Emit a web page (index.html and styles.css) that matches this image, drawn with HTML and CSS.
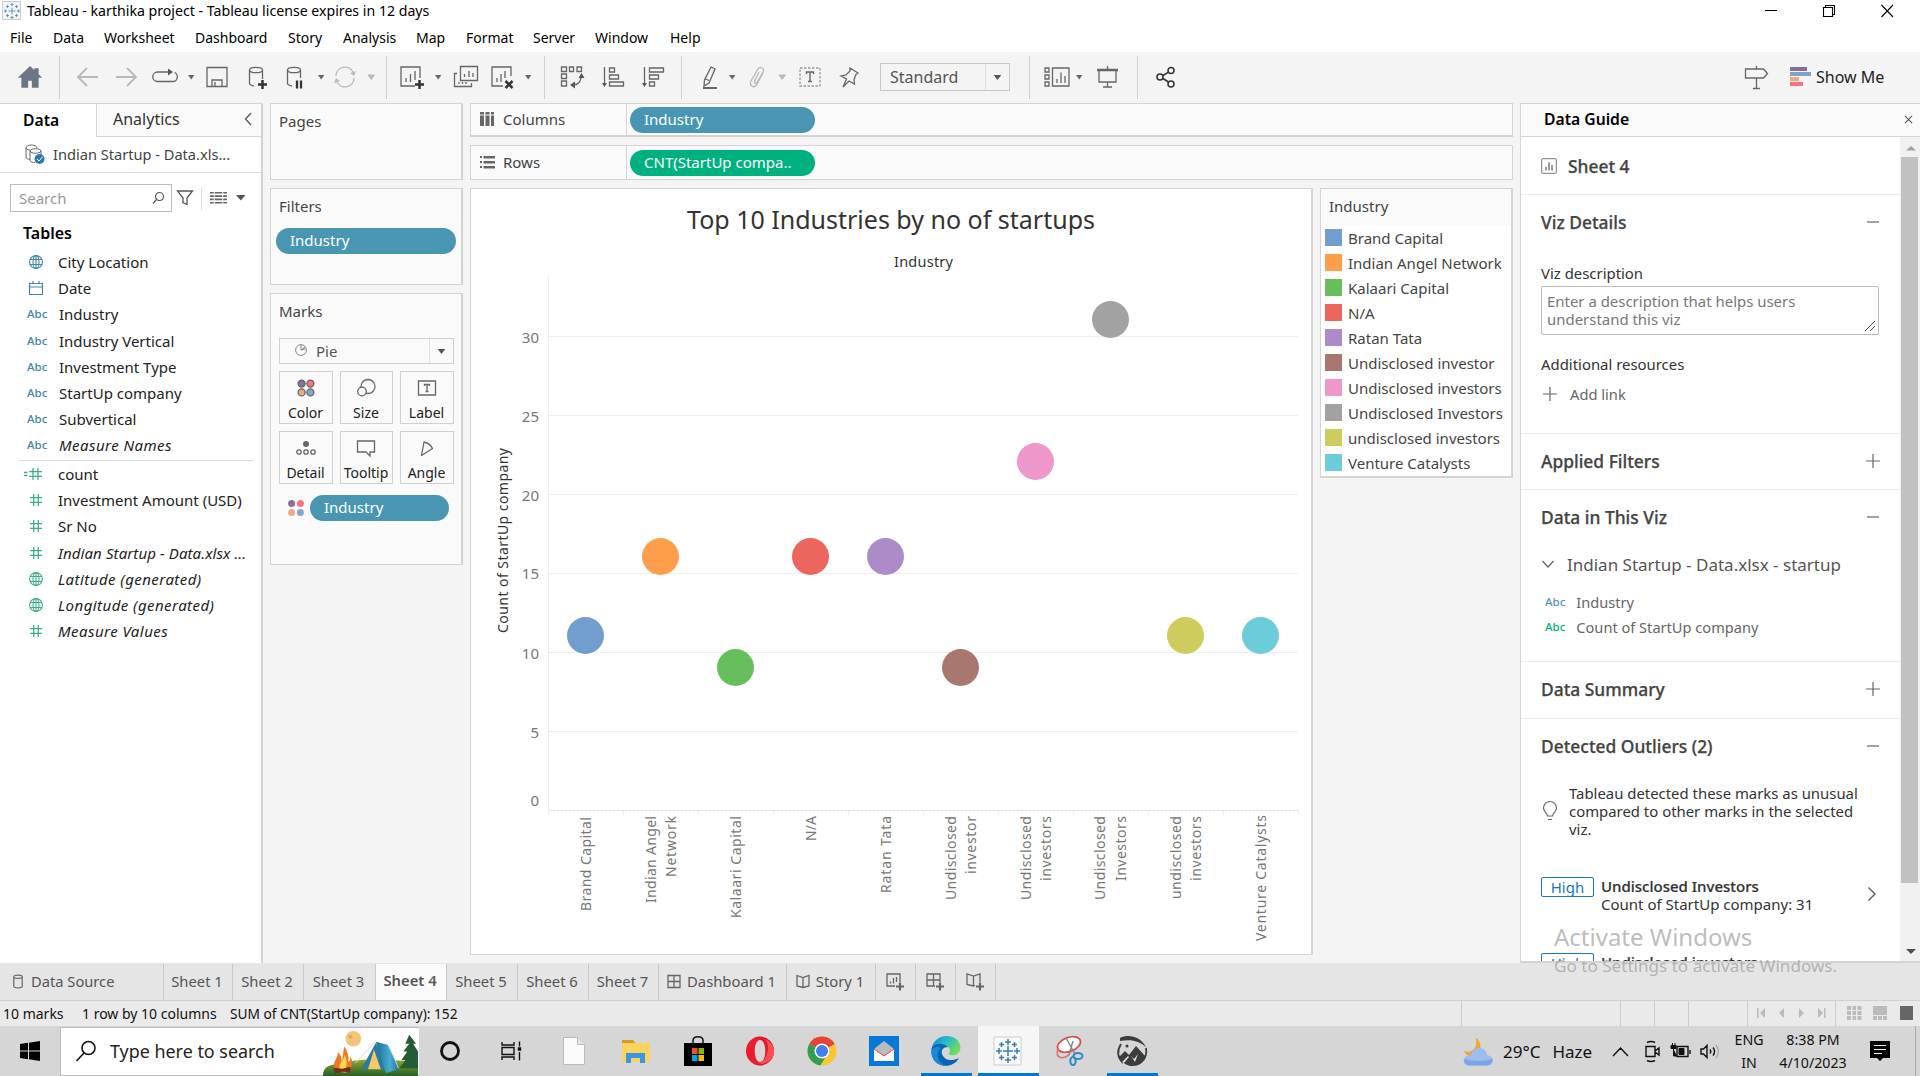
FILE: index.html
```html
<!DOCTYPE html>
<html lang="en">
<head>
<meta charset="utf-8">
<title>Tableau - karthika project</title>
<link rel="stylesheet" href="styles.css">
</head>
<body>
<svg class="defs" aria-hidden="true">
  <symbol id="globe" viewBox="0 0 16 16"><g fill="none" stroke="currentColor" stroke-width="1.1"><circle cx="8" cy="8" r="6.4"/><ellipse cx="8" cy="8" rx="3" ry="6.4"/><path d="M2 5.500h12M2 10.500h12M8 1.600v12.800"/></g></symbol>
  <symbol id="hash" viewBox="0 0 16 16"><path d="M5.700 2v12M10.300 2v12M2 5.700h12M2 10.300h12" fill="none" stroke="currentColor" stroke-width="1.300"/></symbol>
  <symbol id="dots" viewBox="0 0 18 18"><circle cx="4.600" cy="4.600" r="3.500" fill="#8a7099"/><circle cx="13.400" cy="4.600" r="3.500" fill="#fc7182"/><circle cx="4.600" cy="13.400" r="3.500" fill="#f1a981"/><circle cx="13.400" cy="13.400" r="3.500" fill="#85a6ce"/></symbol>
  <symbol id="caret" viewBox="0 0 10 26"><path d="M2 11h6.400l-3.200 4.400z" fill="currentColor"/></symbol>
  <symbol id="plus" viewBox="0 0 16 16"><path d="M8 1v14M1 8h14" stroke="currentColor" stroke-width="1.200"/></symbol>
  <symbol id="minus" viewBox="0 0 16 16"><path d="M2 8h12" stroke="currentColor" stroke-width="1.200"/></symbol>
</svg>

<header class="titlebar">
  <svg class="app-logo" viewBox="0 0 20 20"><rect x=".5" y=".5" width="18" height="18" fill="#f4f4f4" stroke="#ccc"/><path d="M10 6.500v7M6.500 10h7M10 2v3M8.500 3.500h3M10 15v3M8.500 16.500h3M3.500 8.500v3M2 10h3M16.500 8.500v3M15 10h3M5.500 4v3M4 5.500h3M14.500 4v3M13 5.500h3M5.500 13v3M4 14.500h3M14.500 13v3M13 14.500h3" stroke="#5c9bc0" fill="none"/></svg>
  <span class="title-text">Tableau - karthika project - Tableau license expires in 12 days</span>
  <svg class="window-buttons" viewBox="0 0 130 20" fill="none" stroke="#000" stroke-width="1.100"><path d="M1 9.500h12M117.500 4l11.500 12M129 4l-11.500 12"/><path d="M59.500 6.500h9v9h-9zM61.500 6.500v-2h9v9h-2"/></svg>
</header>
<nav class="menu"><span>File</span><span>Data</span><span>Worksheet</span><span>Dashboard</span><span>Story</span><span>Analysis</span><span>Map</span><span>Format</span><span>Server</span><span>Window</span><span>Help</span></nav>

<div class="toolbar">
  <svg class="ico" viewBox="0 0 26 26"><path d="M13 3L2.500 13H5v10h5.500v-7h5v7H21V13h2.500L21 10.500V5h-3v2.500z" fill="#6b7785" stroke="#6b7785"/></svg>
  <i class="sep"></i>
  <svg class="ico dim" viewBox="0 0 26 26"><path d="M24 13H4M13 4l-9 9 9 9" stroke-width="1.800"/></svg>
  <svg class="ico dim" viewBox="0 0 26 26"><path d="M2 13h20M13 4l9 9-9 9" stroke-width="1.800"/></svg>
  <svg class="ico" viewBox="0 0 26 26"><path d="M17 8H5.500a4.700 4.700 0 0 0 0 9.500h15a4.700 4.700 0 0 0 2-9" stroke-width="1.300"/><path d="M16 4.500l5 3.500-5 3.500z" fill="#555" stroke="none"/></svg>
  <svg class="car"><use href="#caret"/></svg>
  <svg class="ico" viewBox="0 0 26 26"><path d="M3 3.500h20v19H3zM8 22v-6h10v6M11 18v4" /></svg>
  <svg class="ico" viewBox="0 0 26 26"><ellipse cx="12" cy="6" rx="6.500" ry="2.700"/><path d="M5.500 6v13.500c0 1 2 2 4.500 2.500M18.500 6v9"/><path d="M18.500 16v9M14 20.500h9" stroke="#333" stroke-width="2.500"/></svg>
  <svg class="ico" viewBox="0 0 26 26"><ellipse cx="12" cy="6" rx="6.500" ry="2.700"/><path d="M5.500 6v13.500c0 1 2 2 4.500 2.500M18.500 6v8"/><path d="M15 16.500v8M19 16.500v8" stroke="#333" stroke-width="2.300"/></svg>
  <svg class="car"><use href="#caret"/></svg>
  <svg class="ico dim" viewBox="0 0 26 26"><path d="M4 12a9 9 0 0 1 17-4M22 14a9 9 0 0 1-17 4"/><path d="M24 7l-2 5-4-3zM2 19l2-5 4 3z" fill="#b8b8b8" stroke="none"/></svg>
  <svg class="car dim"><use href="#caret"/></svg>
  <i class="sep"></i>
  <svg class="ico" viewBox="0 0 26 26"><path d="M16 22H2V3h19v11M7 18v-4M11.500 18v-8M16 16V7"/><path d="M20.500 16v9M16 20.500h9" stroke="#333" stroke-width="2.500"/></svg>
  <svg class="car"><use href="#caret"/></svg>
  <svg class="ico" viewBox="0 0 26 26"><path d="M7.500 2.500h17v14h-17zM11.500 13v-3M16 13V7M20 13V9M4 9.500H1.500v13h17V19M6 20v-2M9.500 20v-2M13 20v-2"/></svg>
  <svg class="ico" viewBox="0 0 26 26"><path d="M14 22H3V3h19v9M8 18v-4M12 18v-8M16 14V7"/><path d="M16.500 17l7 7M23.500 17l-7 7" stroke="#333" stroke-width="2.500"/></svg>
  <svg class="car"><use href="#caret"/></svg>
  <i class="sep"></i>
  <svg class="ico" viewBox="0 0 26 26"><path d="M2.500 3h5v4.500h-5zM10.500 3h4v4.500h-4zM18 3h4.500v4.500H18zM2.500 10h5v4.500h-5zM2.500 17h5v5h-5zM22 12c0 6-3 9-8 9"/><path d="M22.500 9l3 5h-6zM11 21l5-3.500v7z" fill="#555" stroke="none"/></svg>
  <svg class="ico" viewBox="0 0 26 26"><path d="M4.500 3v18M9.500 4h5v4h-5zM9.500 11h9v4h-9zM9.500 18h14v4h-14z"/><path d="M2 19h5l-2.500 4z" fill="#555" stroke="none"/></svg>
  <svg class="ico" viewBox="0 0 26 26"><path d="M4.500 3v18M9.500 4h14v4h-14zM9.500 11h9v4h-9zM9.500 18h5v4h-5z"/><path d="M2 19h5l-2.500 4z" fill="#555" stroke="none"/></svg>
  <i class="sep"></i>
  <svg class="ico" viewBox="0 0 26 26"><path d="M14 3l4 2-6 14-5 3 .500-6zM7.500 14.500l4.500 2"/><path d="M6 24h14" stroke-width="2"/></svg>
  <svg class="car"><use href="#caret"/></svg>
  <svg class="ico dim" viewBox="0 0 26 26"><path d="M14 8l-4.500 9c-.6 2.500 1.500 3 2.500 1.500L18.500 7c.8-3-3.500-5-5.500-2L6 17c-2 5 3 7.500 5.500 4L18 9"/></svg>
  <svg class="car dim"><use href="#caret"/></svg>
  <i class="sep blank"></i>
  <svg class="ico text-tool" viewBox="0 0 26 26"><path d="M3 4h20v18H3z" stroke-dasharray="2.500 1.500" stroke="#999"/><path d="M9.500 10V8h7v2M13 8v9.500M11 17.500h4" stroke-width="1.400"/></svg>
  <svg class="ico" viewBox="0 0 26 26"><path d="M13 4l8 5-2 1.500-2 5 .5 4.500-5.500-3-6 6 3.500-8L4 12l5-1 4-4z"/></svg>
  <div class="fit-select"><span>Standard</span><svg viewBox="0 0 24 26"><path d="M8 11h8l-4 5z" fill="#555"/></svg></div>
  <i class="sep"></i>
  <svg class="ico" viewBox="0 0 26 26"><path d="M1 4h4v4H1zM1 11h4v4H1zM1 18h4v4H1zM8.500 4H25v18H8.500zM13 19v-4M17 19V8.500M21 19v-7"/></svg>
  <svg class="car"><use href="#caret"/></svg>
  <svg class="ico" viewBox="0 0 26 26"><path d="M5 6v12h17V6M13.500 18v5M9 23h9M13.500 2v3"/><path d="M3 6h21" stroke-width="2.500"/></svg>
  <i class="sep"></i>
  <svg class="ico share" viewBox="0 0 26 26"><circle cx="8" cy="13" r="3"/><circle cx="19" cy="6.500" r="3"/><circle cx="19" cy="20" r="3"/><path d="M11 11.500l5.500-3.300M11 14.500l5.500 3.500"/></svg>
  <svg class="ico guide" viewBox="0 0 26 26"><path d="M2.500 5h18l4 4.500-4 4.500h-18zM13.500 2v3M13.500 14v10M10 24.500h7"/></svg>
  <div class="show-me"><svg viewBox="0 0 22 20"><path d="M0 0h17v4H0z" fill="#8a6d9c"/><path d="M0 5h21v4H0z" fill="#7ea3cb"/><path d="M0 10h9v4H0z" fill="#f3a77c"/><path d="M0 15h13v4H0z" fill="#fc7182"/></svg><span>Show Me</span></div>
</div>

<main class="workspace">
  <aside class="data-pane">
    <div class="pane-tabs"><b>Data</b><div><span>Analytics</span><svg viewBox="0 0 10 16"><path d="M8 2L2.500 8 8 14" fill="none" stroke="#555" stroke-width="1.300"/></svg></div></div>
    <div class="source"><svg viewBox="0 0 22 22" fill="none" stroke="#666"><path d="M13 5c0-4-11-4-11 0v9c0 2 2 2 4 2.500M2 5c1 2 3 2 4 2M6 8c0-3 11-3 11 0v4M6 8v9c0 2 3 2.500 5 2.500M6 8c1 3 10 3 11 0"/><circle cx="15.500" cy="16" r="5" fill="#2f7aa8" stroke="none"/><path d="M13 16l2 2 3.500-4" stroke="#fff"/></svg><span>Indian Startup - Data.xls...</span></div>
    <div class="search-row">
      <div class="search"><span>Search</span><svg viewBox="0 0 16 16" fill="none" stroke="#555" stroke-width="1.200"><circle cx="9.500" cy="6.500" r="4"/><path d="M6.500 9.500L3 13.500"/></svg></div>
      <svg class="funnel" viewBox="0 0 18 18"><path d="M1.500 2h15l-5.500 7v6.500l-4-2V9z" fill="none" stroke="#555" stroke-width="1.300"/></svg><i></i>
      <svg class="list" viewBox="0 0 18 14"><path d="M0 1.500h18M0 5h18M0 8.500h18M0 12h18" stroke="#666" stroke-width="1.700" stroke-dasharray="4 1 8 1"/></svg>
      <svg class="list-caret" viewBox="0 0 10 6"><path d="M0 0h9.500l-4.700 5.500z" fill="#555"/></svg>
    </div>
    <h2>Tables</h2>
    <ul class="fields dimension">
      <li><svg><use href="#globe"/></svg><span>City Location</span></li>
      <li><svg viewBox="0 0 16 16"><path d="M1.500 3.500h13v11h-13zM1.500 7h13M5 1v3M11 1v3" fill="none" stroke="currentColor" stroke-width="1.200"/></svg><span>Date</span></li>
      <li><b>Abc</b><span>Industry</span></li><li><b>Abc</b><span>Industry Vertical</span></li><li><b>Abc</b><span>Investment Type</span></li><li><b>Abc</b><span>StartUp company</span></li><li><b>Abc</b><span>Subvertical</span></li><li><b>Abc</b><em>Measure Names</em></li>
    </ul>
    <ul class="fields measure">
      <li><svg class="calc" viewBox="0 0 20 16"><path d="M0 6.500h3.500M0 9.500h3.500M9 2v12M14 2v12M5 5.700h13M5 10.300h13" stroke="currentColor" stroke-width="1.300"/></svg><span>count</span></li>
      <li><svg><use href="#hash"/></svg><span>Investment Amount (USD)</span></li><li><svg><use href="#hash"/></svg><span>Sr No</span></li><li><svg><use href="#hash"/></svg><em class="long">Indian Startup - Data.xlsx ...</em></li><li><svg><use href="#globe"/></svg><em>Latitude (generated)</em></li><li><svg><use href="#globe"/></svg><em>Longitude (generated)</em></li><li><svg><use href="#hash"/></svg><em>Measure Values</em></li>
    </ul>
  </aside>

  <section class="cards">
    <div class="card pages"><h3>Pages</h3></div>
    <div class="card filters"><h3>Filters</h3><div class="pill">Industry</div></div>
    <div class="card marks"><h3>Marks</h3>
      <div class="mark-type"><svg viewBox="0 0 14 14" fill="none" stroke="#888"><circle cx="7" cy="7" r="5.400"/><path d="M7 7V2M7 7l4-3M7 7l4.500-1"/></svg><span>Pie</span><svg class="drop" viewBox="0 0 24 24"><path d="M8 10h8l-4 5z" fill="#555"/></svg></div>
      <div class="mark-grid">
        <div><svg viewBox="0 0 20 20"><use href="#dots" x="1" y="1" width="18" height="18"/></svg>Color</div>
        <div><svg viewBox="0 0 20 20"><circle cx="12" cy="8.500" r="7"/><circle cx="6" cy="13.500" r="4.300" fill="#fafafa"/></svg>Size</div>
        <div><svg viewBox="0 0 20 20"><path d="M1.500 3h17v14h-17z"/><path d="M7.500 8V6.500h5V8M10 6.500V13M8.500 13.500h3"/></svg>Label</div>
        <div><svg viewBox="0 0 20 20"><circle cx="10" cy="6" r="3" fill="#666" stroke="none"/><circle cx="3" cy="14" r="2.200"/><circle cx="10" cy="14" r="2.200"/><circle cx="17" cy="14" r="2.200"/></svg>Detail</div>
        <div><svg viewBox="0 0 20 20"><path d="M1.500 3h17v11H14v4l-4-4H1.500z"/></svg>Tooltip</div>
        <div><svg viewBox="0 0 20 20"><path d="M7 4c4 1 7 3 8.500 6.500L4.500 17.500z" stroke-linejoin="round"/></svg>Angle</div>
      </div>
      <div class="encoding"><svg><use href="#dots"/></svg><div class="pill">Industry</div></div>
    </div>
  </section>

  <section class="canvas">
    <div class="shelf columns"><div class="shelf-name"><svg viewBox="0 0 16 16"><path d="M0 0h4v2.500H0zM0 3.500h4V14H0zM5.500 0h4v2.500h-4zM5.500 3.500h4V14h-4zM11 0h3v2.500h-3zM11 3.500h3V14h-3z" fill="#666"/></svg><span>Columns</span></div><div class="pill">Industry</div></div>
    <div class="shelf rows"><div class="shelf-name"><svg viewBox="0 0 16 16"><path d="M0 1h2v2H0zM3.500 1H15v2.500H3.500zM0 6h2v2H0zM3.500 6H15v2.500H3.500zM0 11h2v2H0zM3.500 11H15v2.500H3.500z" fill="#666"/></svg><span>Rows</span></div><div class="pill green">CNT(StartUp compa..</div></div>
    <div class="view-row">
      <div class="view">
        <svg class="chart" viewBox="471 189 840 765">
          <text class="chart-title" x="687" y="229" textLength="408" lengthAdjust="spacingAndGlyphs">Top 10 Industries by no of startups</text>
          <text class="chart-sub" x="894" y="267" textLength="59">Industry</text>
          <g class="gridlines"><path d="M549 336.500h749M549 415.500h749M549 494.500h749M549 573.500h749M549 652.500h749M549 731.500h749"/><path d="M548.500 275v535"/><path d="M548.500 810.500h750" stroke="#ddd" stroke-dasharray="3 1"/><path d="M548.500 811v4M623.500 811v4M698.500 811v4M773.500 811v4M848.500 811v4M923.500 811v4M998.500 811v4M1073.500 811v4M1148.500 811v4M1223.500 811v4M1298.500 811v4"/></g>
          <g class="ticks"><text x="539" y="342.500">30</text><text x="539" y="421.500">25</text><text x="539" y="500.500">20</text><text x="539" y="578.500">15</text><text x="539" y="658.500">10</text><text x="539" y="737.500">5</text><text x="539" y="805.500">0</text></g>
          <text class="axis-title" transform="translate(508 633) rotate(-90)" textLength="185">Count of StartUp company</text>
          <g><circle cx="585.500" cy="635.500" r="18.500" fill="#729ece"/><circle cx="660.500" cy="556.500" r="18.500" fill="#ff9e4a"/><circle cx="735.500" cy="667.500" r="18.500" fill="#67bf5c"/><circle cx="810.500" cy="556.500" r="18.500" fill="#ed665d"/><circle cx="885.500" cy="556.500" r="18.500" fill="#ad8bc9"/><circle cx="960.500" cy="667.500" r="18.500" fill="#a8786e"/><circle cx="1035.500" cy="461.500" r="18.500" fill="#ed97ca"/><circle cx="1110.500" cy="319.500" r="18.500" fill="#a2a2a2"/><circle cx="1185.500" cy="635.500" r="18.500" fill="#cdcc5d"/><circle cx="1260.500" cy="635.500" r="18.500" fill="#6dccda"/></g>
          <g class="names">
            <text transform="translate(591 911) rotate(-90)" textLength="94">Brand Capital</text>
            <text transform="translate(656 903) rotate(-90)" textLength="87">Indian Angel</text><text transform="translate(676 877) rotate(-90)" textLength="61">Network</text>
            <text transform="translate(741 918) rotate(-90)" textLength="102">Kalaari Capital</text>
            <text transform="translate(816 841) rotate(-90)" textLength="25">N/A</text>
            <text transform="translate(891 893) rotate(-90)" textLength="77">Ratan Tata</text>
            <text transform="translate(956 900) rotate(-90)" textLength="84">Undisclosed</text><text transform="translate(976 874) rotate(-90)" textLength="58">investor</text>
            <text transform="translate(1031 900) rotate(-90)" textLength="84">Undisclosed</text><text transform="translate(1051 881) rotate(-90)" textLength="65">investors</text>
            <text transform="translate(1105 900) rotate(-90)" textLength="84">Undisclosed</text><text transform="translate(1126 881) rotate(-90)" textLength="65">Investors</text>
            <text transform="translate(1181 899) rotate(-90)" textLength="83">undisclosed</text><text transform="translate(1201 881) rotate(-90)" textLength="65">investors</text>
            <text transform="translate(1266 941) rotate(-90)" textLength="126">Venture Catalysts</text>
          </g>
        </svg>
      </div>
      <div class="legend"><h3>Industry</h3><ul><li class="c1">Brand Capital</li><li class="c2">Indian Angel Network</li><li class="c3">Kalaari Capital</li><li class="c4">N/A</li><li class="c5">Ratan Tata</li><li class="c6">Undisclosed investor</li><li class="c7">Undisclosed investors</li><li class="c8">Undisclosed Investors</li><li class="c9">undisclosed investors</li><li class="c10">Venture Catalysts</li></ul></div>
    </div>
  </section>

  <aside class="guide-pane">
    <div class="guide-head"><b>Data Guide</b><svg viewBox="0 0 10 10"><path d="M1 1l8 8M9 1L1 9" stroke="#555" stroke-width="1.200"/></svg></div>
    <div class="guide-body">
      <div class="guide-content">
        <section class="g-sheet"><svg viewBox="0 0 16 16" fill="none" stroke="#777"><rect x=".7" y=".7" width="14.600" height="14.600" rx="1"/><path d="M5 12.500V9M8 12.500V4.500M11 12.500V7" stroke-width="1.500"/></svg><h4>Sheet 4</h4></section>
        <section class="g-details"><div class="g-title"><h4>Viz Details</h4><svg><use href="#minus"/></svg></div><h5>Viz description</h5><div class="textarea">Enter a description that helps users<br>understand this viz<svg viewBox="0 0 12 12"><path d="M1 11L11 1M6 11l5-5" stroke="#555"/></svg></div><h5 class="resources">Additional resources</h5><div class="add-link"><svg><use href="#plus"/></svg><span>Add link</span></div></section>
        <section class="g-applied"><div class="g-title"><h4>Applied Filters</h4><svg><use href="#plus"/></svg></div></section>
        <section class="g-data"><div class="g-title"><h4>Data in This Viz</h4><svg><use href="#minus"/></svg></div><div class="g-source"><svg viewBox="0 0 14 14"><path d="M1.500 3l5.500 6 5.500-6" fill="none" stroke="#666" stroke-width="1.300"/></svg><span>Indian Startup - Data.xlsx - startup</span></div><div class="g-field"><b>Abc</b><span>Industry</span></div><div class="g-field green-text"><b>Abc</b><span>Count of StartUp company</span></div></section>
        <section class="g-summary"><div class="g-title"><h4>Data Summary</h4><svg><use href="#plus"/></svg></div></section>
        <section class="g-outliers"><div class="g-title"><h4>Detected Outliers (2)</h4><svg><use href="#minus"/></svg></div>
          <div class="hint"><svg viewBox="0 0 16 20" fill="none" stroke="#666" stroke-width="1.200"><path d="M5.500 15c0-3-4-4-4-8a6.500 6.500 0 0 1 13 0c0 4-4 5-4 8zM6 18.500h4"/></svg><p>Tableau detected these marks as unusual<br>compared to other marks in the selected<br>viz.</p></div>
          <div class="outlier"><span class="badge">High</span><p><b>Undisclosed Investors</b><br>Count of StartUp company: 31</p><svg viewBox="0 0 10 16"><path d="M1.500 1.500L8 8l-6.500 6.500" fill="none" stroke="#555" stroke-width="1.300"/></svg></div>
          <div class="outlier second"><span class="badge">High</span><p><b>Undisclosed investors</b></p></div>
        </section>
      </div>
      <div class="scrollbar"><svg viewBox="0 0 19 20"><path d="M5 13.500h10L10 9z" fill="#a3a3a3"/></svg><i></i><svg class="down" viewBox="0 0 19 20"><path d="M5 8h10l-5 5z" fill="#505050"/></svg></div>
    </div>
  </aside>
</main>

<nav class="sheet-tabs">
  <div class="data-source"><svg viewBox="0 0 14 16"><path d="M2.500 3c0-2.300 9-2.300 9 0v10c0 2.300-9 2.300-9 0zM2.500 3c0 2.300 9 2.300 9 0"/></svg><span>Data Source</span></div>
  <div>Sheet 1</div><div>Sheet 2</div><div>Sheet 3</div><div class="active">Sheet 4</div><div>Sheet 5</div><div>Sheet 6</div><div>Sheet 7</div>
  <div><svg viewBox="0 0 14 14"><path d="M1 1h12v12H1zM7 1v12M1 7h12"/></svg><span>Dashboard 1</span></div>
  <div><svg viewBox="0 0 14 14"><path d="M1 1l6 2 6-2v10.500L7 13l-6-1.500zM7 3v10"/></svg><span>Story 1</span></div>
  <div><svg class="add" viewBox="0 0 19 19"><path d="M10 14H2V2h13v8M5.500 11.500v-2M8.500 11.500V6M11.500 10V5"/><path d="M15 10.500v8M11 14.500h8" stroke-width="2.200"/></svg></div>
  <div><svg class="add" viewBox="0 0 19 19"><path d="M10 14H2V2h13v8M8.500 2v12M2 8h13"/><path d="M15 10.500v8M11 14.500h8" stroke-width="2.200"/></svg></div>
  <div><svg class="add" viewBox="0 0 19 19"><path d="M10 13.500L8.500 14 2 12.500V2l6.500 2L15 2v8M8.500 4v10"/><path d="M15 10.500v8M11 14.500h8" stroke-width="2.200"/></svg></div>
</nav>
<div class="status"><span>10 marks</span><span>1 row by 10 columns</span><span class="sum">SUM of CNT(StartUp company): 152</span><i></i><i></i><i></i><i></i>
  <div class="pager"><svg viewBox="0 0 88 16" fill="#bbb"><path d="M9 3h1.500v10H9zM17 3v10l-5-5zM36 3v10l-5-5zM51 3v10l5-5zM70 3v10l5-5zM76 3h1.500v10H76z"/></svg></div>
  <div class="views"><svg viewBox="0 0 78 16"><path d="M0 1h4v4H0zM5.500 1h3.500v4H5.500zM10.500 1h4v4h-4zM0 6h4v4H0zM5.500 6h3.500v4H5.500zM10.500 6h4v4h-4zM0 11h4v4H0zM5.500 11h3.500v4H5.500zM10.500 11h4v4h-4zM26 1h14v9H26zM26 11h4v4h-4zM31 11h4v4h-4zM36 11h4v4h-4z" fill="#bbb"/><path d="M53 1h13v14H53z" fill="#666"/></svg></div>
</div>

<footer class="taskbar">
  <div class="start"><svg viewBox="0 0 20 20"><path d="M0 3l8-1.200V9.500H0zM9 1.700L20 0v9.500H9zM0 10.500h8v7.700L0 17zM9 10.500h11V20L9 18.300z"/></svg></div>
  <div class="os-search"><svg viewBox="0 0 22 22" fill="none" stroke="#111" stroke-width="1.600"><circle cx="13.500" cy="8" r="6.500"/><path d="M9 13l-7.500 8"/></svg><span>Type here to search</span>
    <svg class="camp" viewBox="0 0 97 50"><defs><linearGradient id="hill" x2="0" y2="1"><stop stop-color="#92a92d"/><stop offset="1" stop-color="#255f26"/></linearGradient><linearGradient id="tent" x2="1"><stop stop-color="#206c98"/><stop offset=".6" stop-color="#49add0"/><stop offset="1" stop-color="#1d6e9a"/></linearGradient></defs><path d="M0 50c0-10 7-12 17-12 20-8 60-4 80-2v14z" fill="url(#hill)"/><circle cx="31" cy="12" r="8" fill="#f4c577"/><circle cx="28" cy="10" r="2" fill="#dfa75e"/><path d="M88 8l7 9h-3l5 8v17H78l6-8h-4l6-9h-4l6-8h-4z" fill="#245d35"/><path d="M54 16L39 43h27z" fill="#2a7ba4"/><path d="M54 15l12 3 12 25-14 4z" fill="url(#tent)"/><path d="M52 23l-6 20h13z" fill="#f2c967"/><path d="M53 15L33 37M68 20l9 22" stroke="#cddce0" fill="none"/><path d="M12 44c-3-9 3-10 3-18 4 3 4 6 4 9 2-3 1-11 3-15 5 9 4 12 4 16 2-2 2-4 2-6 5 8-1 16-6 17z" fill="#ed7822"/><path d="M17 43c-1-8 5-8 5-15 4 8 2 15-1 17z" fill="#ffd651"/><path d="M11 43l17 2M12 46l16-4" stroke="#6c3023" stroke-width="3"/></svg></div>
  <div class="tasks">
    <div><svg viewBox="0 0 30 30"><circle cx="15" cy="15" r="8.500" fill="none" stroke="#111" stroke-width="2.800"/></svg></div>
    <div><svg viewBox="0 0 30 30" fill="none" stroke="#111" stroke-width="1.400"><path d="M5 6v3h12V6M5 24v-3h12v3M5 11.500h12v7H5zM22.500 5.500v5M22.500 16v8.500"/><path d="M21.500 12h2v2h-2z" fill="#111"/></svg></div>
    <div><svg viewBox="0 0 30 30"><path d="M4.500 1.500h14l7 7v20h-21z" fill="#fafafa" stroke="#bbb"/><path d="M18.500 1.500v7h7" fill="#e5e5e5" stroke="#bbb"/></svg></div>
    <div><svg viewBox="0 0 30 30"><path d="M1 4h11l3 4H1z" fill="#d89c1c"/><path d="M1 7h28v19H1z" fill="#fcd35f"/><path d="M5 27V17h19v10h-5v-5h-9v5z" fill="#3796e5"/></svg></div>
    <div><svg viewBox="0 0 30 30"><path d="M1 7h28v23H1z"/><path d="M10 7V4.500c0-5 10-5 10 0V7" fill="none" stroke="#111" stroke-width="1.500"/><path d="M9 12h5.500v6H9z" fill="#f25022"/><path d="M15.500 12H21v6h-5.500z" fill="#7fba00"/><path d="M9 19h5.500v6H9z" fill="#00a4ef"/><path d="M15.500 19H21v6h-5.500z" fill="#ffb900"/></svg></div>
    <div><svg viewBox="0 0 30 30"><path fill-rule="evenodd" d="M15 .5a14 14.500 0 0 0 0 29 14 14.500 0 0 0 0-29zM15 4c7 0 7 22 0 22S8 4 15 4z" fill="#ed1b2f"/><path d="M15 .5a14 14.500 0 0 1 0 29c-2 0-4-1-5-2 15 4 17-27 0-25 1-1 3-2 5-2z" fill="#c5152a" opacity=".35"/><path d="M20 3c12 6 12 20 0 24-2 1-5 1-8-1 11 2 14-18 8-23z" fill="#ff4f52"/></svg></div>
    <div><svg viewBox="0 0 30 30"><circle cx="15" cy="15" r="14.500" fill="#fbc72e"/><path d="M15 15L2.400 7.800A14.500 14.500 0 0 1 27.600 8z" fill="#e54336"/><path d="M15 15L2.400 7.800a14.500 14.500 0 0 0 10.800 21.600l6.500-10z" fill="#2fa052"/><circle cx="15" cy="15" r="7.500" fill="#fff"/><circle cx="15" cy="15" r="6" fill="#407fec"/></svg></div>
    <div><svg viewBox="0 0 30 30"><path d="M0 0h30v30H0z" fill="#0878d8"/><path d="M5 13l10-8 10 8v12H5z" fill="#bbb"/><path d="M5 13l10 7 10-7v12H5z" fill="#fafafa"/><path d="M5 13l10 7 10-7" fill="none" stroke="#d84848"/></svg></div>
    <div class="open"><svg viewBox="0 0 30 30"><defs><linearGradient id="edge" x2="1" y2=".5"><stop stop-color="#1683d0"/><stop offset=".5" stop-color="#25b9ce"/><stop offset="1" stop-color="#72dc59"/></linearGradient></defs><path d="M.5 13C3-4 28-4 29.500 11c0 8-8 10-12 7 4-4 0-9-7-8-5 1-7 3-10 3z" fill="url(#edge)"/><path d="M.5 15C0 8 10 5 17 11c-5 0-7 3-6 7 2 6 9 8 17 4C21 35 0 31 .5 15z" fill="#0964b5"/><path d="M10 12c-8 7-1 17 7 18C7 31-1 23 .5 14c2-3 6-4 9.500-2z" fill="#158bd4"/></svg></div>
    <div class="open current"><svg viewBox="0 0 30 30"><path d="M1 1h27v28H1z" fill="#fafafa" stroke="#ccc"/><path d="M15 10v10M10 15h10M15 3v6M12 6h6M15 21v6M12 24h6M6 12v6M3 15h6M24 12v6M21 15h6M8.500 6v5M6 8.500h5M21.500 6v5M19 8.500h5M8.500 19v5M6 21.500h5M21.500 19v5M19 21.500h5" stroke="#397ead" stroke-width="1.500"/></svg></div>
    <div><svg viewBox="0 0 30 30" fill="none"><ellipse cx="14" cy="8.500" rx="12" ry="7" transform="rotate(-20 14 8.500)" fill="#fff" stroke="#de4b4b" stroke-width="1.700"/><path d="M3 13c-3 9 4 11 11 6" stroke="#dc7777" stroke-width="1.700"/><path d="M11 2l9 16M18 5l-4 14" stroke="#888" stroke-width="1.500"/><ellipse cx="23" cy="20" rx="4.500" ry="3" stroke="#268acd" stroke-width="2"/><ellipse cx="18" cy="25" rx="2.700" ry="4" stroke="#268acd" stroke-width="2"/></svg></div>
    <div class="open"><svg viewBox="0 0 30 30"><path d="M3 2c8-4 20-2 26 9-7-6-14-8-26-6z" fill="#3c3c3c"/><path d="M4 8C-1 16 1 22 6 27M29 12c1 5 0 10-5 14" fill="none" stroke="#3c3c3c" stroke-width="1.800"/><path d="M2 21l6-6 4 4 7-9 10 11C25 32 8 34 2 21z" fill="#3c3c3c"/><circle cx="10" cy="10" r="1.500" fill="#3c3c3c"/><path d="M5 26l6-6 1 1-5 6zM14 20l3 3 4-5-3 8z" fill="#ddd"/></svg></div>
  </div>
  <div class="weather"><svg viewBox="0 0 32 30"><path d="M13 0c3 11-4 17-12 14 4 10 18 6 17-5 0-4-2-7-5-9z" fill="#f2a52a"/><path d="M7 29c-9-1-8-11 1-11 2-10 16-9 17 0 9 2 7 11 0 11z" fill="#9dbcf0"/><path d="M7 29c-5 0-7-4-5-7 7 3 21 3 28 0 1 4-2 7-6 7z" fill="#7ca5e6"/></svg><span>29°C</span><span>Haze</span></div>
  <svg class="tray" viewBox="0 0 112 24" fill="none" stroke="#111" stroke-width="1.400"><path d="M1 17l7.500-8 7.500 8M34 7.500h9v10h-9zM43 12l4-3v7l-4-3M35 3.500c3-1.500 5-1.500 8 0M35 21.500c3 1.500 5 1.500 8 0"/><path d="M65 7.500h11v10H65zM78 11v4"/><path d="M67 9.500h5v6h-5zM59 6.500h5v3h-5zM60.500 4v2M63 4v2M61.500 10v7H65" fill="#111" stroke-width="1"/><path d="M89 10h2.500L95 6.500v12L91.500 15H89zM98 10.500c1 1.500 1 3 0 4M101 8.500c2 2.500 2 5.500 0 8"/><path d="M104 6c3 4 3 9 0 13" stroke="#aaa"/></svg>
  <div class="lang">ENG<br>IN</div><div class="clock">8:38 PM<br>4/10/2023</div>
  <svg class="notify" viewBox="0 0 20 20"><path d="M0 0h20v17h-7l-3 3-3-3H0z"/><path d="M4 4.500h12M4 8.500h12M4 12.500h8" stroke="#eee"/></svg><i class="desktop-edge"></i>
</footer>
<div class="activation"><strong>Activate Windows</strong><span>Go to Settings to activate Windows.</span></div>
</body>
</html>
```
FILE: styles.css
```css
* { box-sizing: border-box; }
body { margin: 0; width: 1920px; height: 1076px; overflow: hidden; background: #f4f4f4; color: #333; font: 15px/20px "Noto Sans", "Liberation Sans", sans-serif; display: flex; flex-direction: column; }
h2, h3, h4, h5, p, ul { margin: 0; padding: 0; font-weight: 400; }
ul { list-style: none; }
svg { display: block; flex: none; overflow: visible; }
span, b, em, h3, h4, h5 { white-space: nowrap; }
.defs { position: absolute; width: 0; height: 0; }

.titlebar { height: 22px; background: #fff; display: flex; align-items: center; padding-left: 2px; color: #000; }
.app-logo { width: 20px; height: 20px; margin-right: 5px; }
.title-text { font-size: 14.150px; }
.window-buttons { width: 130px; height: 20px; margin-left: auto; margin-right: 26px; }
.menu { height: 30px; padding-left: 10px; background: #fff; color: #000; font-size: 14px; line-height: 32px; display: grid; grid-template-columns: 43px 51px 91px 93px 55px 73px 50px 67px 62px 75px auto; }

.toolbar { height: 51px; padding: 0 0 1px 17px; display: grid; align-items: center; justify-items: start; grid-template-columns: 42px 15px 40px 38px 34px 18px 40px 38px 34px 16px 34px 20px 13px 34px 20px 36px 34px 21px 15px 41px 40px 41px 16px 30px 18px 31px 1px 20px 40px 43px 149px 15px 30px 20px 43px 15px 591px 47px auto; }
.ico { width: 26px; height: 26px; fill: none; stroke: #666; stroke-width: 1.300; }
.dim { color: #bbb; stroke: #b8b8b8; }
.share { stroke: #333; stroke-width: 1.500; }
.car { width: 10px; height: 26px; color: #666; }
.car.dim { color: #bbb; }
.sep { width: 1px; height: 43px; background: #cfcfcf; }
.sep.blank { background: none; }
.text-tool { margin-left: 20px; }
.toolbar .text-tool { margin-left: 20px; }
.text-tool + .ico { margin-left: 40px; }
.toolbar .fit-select { margin-left: 43px; }
.toolbar { grid-template-columns: 42px 15px 40px 38px 34px 18px 40px 38px 34px 16px 34px 20px 13px 34px 20px 36px 34px 21px 15px 41px 40px 41px 16px 30px 18px 31px 1px 40px 43px 149px 15px 30px 20px 43px 15px 591px 47px auto; }
.toolbar { grid-template-columns: 42px 15px 40px 38px 34px 18px 40px 38px 34px 16px 34px 20px 13px 34px 20px 36px 34px 21px 15px 41px 40px 41px 16px 30px 18px 32px 19px 1px 40px 43px 149px 15px 30px 20px 43px 15px 591px 47px auto; }
.toolbar .text-tool, .toolbar .text-tool + .ico, .toolbar .fit-select { margin-left: 0; }
.fit-select { width: 130px; height: 28px; border: 1px solid #c8c8c8; display: flex; align-items: center; padding-left: 9px; font-size: 16px; color: #555; }
.fit-select span { margin-top: -1px; }
.fit-select svg { width: 24px; height: 26px; margin-left: auto; border-left: 1px solid #ddd; }
.toolbar .blank { display: none; }
.toolbar { grid-template-columns: 42px 15px 40px 38px 34px 18px 40px 38px 34px 16px 34px 20px 13px 34px 20px 36px 34px 21px 15px 41px 40px 41px 16px 30px 18px 32px 20px 40px 43px 149px 15px 30px 20px 43px 15px 591px 47px auto; }
.show-me { display: flex; align-items: center; font-size: 16px; color: #222; }
.show-me svg { width: 22px; height: 20px; margin-right: 4px; }

.workspace { height: 860px; display: flex; }
.data-pane { width: 263px; background: #fff; border-right: 2px solid #d4d4d4; border-top: 1px solid #d4d4d4; color: #222; }
.pane-tabs { height: 33px; display: flex; align-items: center; font-size: 16px; color: #000; }
.pane-tabs b { width: 96px; padding: 0 0 2px 23px; font-weight: 600; font-size: 15.700px; }
.pane-tabs div { flex: 1; height: 33px; display: flex; align-items: center; padding: 0 8px 2px 16px; background: #fafafa; border-left: 1px solid #d4d4d4; border-bottom: 1px solid #d4d4d4; color: #333; }
.pane-tabs svg { width: 10px; height: 16px; margin-left: auto; }
.source { height: 36px; display: flex; align-items: center; padding: 0 0 2px 24px; gap: 7px; border-bottom: 1px solid #ddd; color: #444; font-size: 14.600px; }
.source svg { width: 22px; height: 22px; }
.search-row { height: 51px; padding: 0 14px 1px 10px; display: flex; align-items: center; }
.search { width: 162px; height: 28px; border: 1px solid #bbb; display: flex; align-items: center; justify-content: space-between; padding: 0 5px 1px 8px; color: #999; }
.search svg { width: 16px; height: 16px; }
.funnel { width: 18px; height: 18px; margin-left: 4px; }
.search-row i { height: 23px; border-left: 1px solid #ddd; margin: 0 8px 0 7px; }
.list { width: 17px; height: 14px; }
.list-caret { width: 10px; height: 6px; margin-left: 9px; }
.data-pane h2 { height: 25px; padding: 0 0 0 23px; font: 600 16px/19px "Noto Sans", sans-serif; color: #000; }
.fields li { height: 26.170px; display: flex; align-items: center; }
.fields li > :first-child { flex: none; width: 16px; height: 16px; margin: 0 14px 0 28px; }
.fields b { font-size: 11.500px; line-height: 18px; font-weight: 500; }
.fields li > b:first-child { width: 19px; height: 18px; margin: 0 13px 0 27px; }
.fields li > .calc { width: 20px; margin: 0 14px 0 24px; }
.fields em { letter-spacing: .45px; }
.fields .long { letter-spacing: .1px; }
.dimension { height: 211px; }
.dimension svg, .dimension b { color: #4385a6; }
.measure svg { color: #3fae85; }
.measure { background: linear-gradient(#ddd, #ddd) 19px 0 / 235px 1px no-repeat; padding-top: 1px; }

.cards { width: 200px; margin-left: 7px; display: flex; flex-direction: column; gap: 8px; }
.card { width: 193px; background: #fafafa; border: 1px solid #d4d4d4; border-right-width: 2px; padding: 8px 5px; }
.card h3 { font-size: 15px; line-height: 19px; padding-left: 3px; color: #444; }
.pages { height: 77px; }
.filters { height: 97px; }
.filters h3 { margin-bottom: 12px; }
.marks { height: 272px; padding: 8px 7px 0 8px; }
.marks h3 { padding-left: 0; margin-bottom: 17px; }
.pill { height: 26px; padding-left: 14px; border-radius: 13px; background: #4996b2; color: #fff; line-height: 24px; white-space: nowrap; }
.mark-type { height: 26px; border: 1px solid #d0d0d0; display: flex; align-items: center; padding-left: 14px; color: #555; }
.mark-type span { margin-top: -1px; }
.mark-type > svg:first-child { width: 14px; height: 14px; margin-right: 8px; margin-top: -2px; }
.mark-type .drop { width: 24px; height: 24px; margin-left: auto; border-left: 1px solid #ddd; }
.mark-grid { display: grid; grid-template-columns: 54px 53px 54px; column-gap: 7px; row-gap: 7px; margin-top: 7px; }
.mark-grid div { height: 53px; border: 1px solid #d0d0d0; display: flex; flex-direction: column; align-items: center; gap: 6px; padding: 6px 1px 0 0; font-size: 14px; line-height: 18px; color: #222; }
.mark-grid svg { width: 20px; height: 20px; fill: none; stroke: #666; stroke-width: 1.300; }
.encoding { display: flex; align-items: center; gap: 5px; padding-left: 8px; margin-top: 11px; }
.encoding svg { width: 18px; height: 18px; }
.encoding .pill { width: 139px; }

.canvas { width: 1050px; display: flex; flex-direction: column; }
.shelf { width: 1043px; height: 35px; border: 1px solid #d4d4d4; background: #fafafa; display: flex; align-items: center; margin-bottom: 8px; }
.columns { height: 34px; border-bottom-width: 2px; }
.shelf-name { width: 156px; height: 100%; display: flex; align-items: center; gap: 7px; padding-left: 9px; border-right: 1px solid #d4d4d4; color: #444; }
.shelf-name span { margin-top: -1px; }
.shelf-name svg { width: 16px; height: 16px; }
.shelf .pill { width: 185px; margin-left: 3px; }
.pill.green { background: #00b180; line-height: 25px; }
.view-row { display: flex; gap: 7px; align-items: flex-start; }
.view { width: 843px; height: 767px; background: #fff; border: 1px solid #d4d4d4; border-right-width: 2px; }
.chart { width: 840px; height: 765px; }
.chart-title { font-size: 25px; fill: #333; }
.chart-sub { font-size: 14.500px; fill: #333; }
.axis-title { font-size: 14px; fill: #333; }
.gridlines { fill: none; stroke: #eee; }
.ticks text { text-anchor: end; font-size: 15px; fill: #777; }
.names text { font-size: 14px; fill: #777; }
.legend { width: 193px; height: 290px; background: #fff; border: 1px solid #d4d4d4; border-width: 1px 2px 2px 1px; }
.legend h3 { height: 36px; padding-left: 8px; font-size: 15px; line-height: 34px; background: #fafafa; color: #444; }
.legend ul { padding: 0 0 0 4px; }
.legend li { height: 25px; display: flex; align-items: center; gap: 6px; white-space: nowrap; color: #444; }
.legend li::before { content: ""; width: 17px; height: 17px; background: var(--mark); }
.c1 { --mark: #729ece; } .c2 { --mark: #ff9e4a; } .c3 { --mark: #67bf5c; } .c4 { --mark: #ed665d; } .c5 { --mark: #ad8bc9; }
.c6 { --mark: #a8786e; } .c7 { --mark: #ed97ca; } .c8 { --mark: #a2a2a2; } .c9 { --mark: #cdcc5d; } .c10 { --mark: #6dccda; }

.guide-pane { width: 400px; height: 860px; border: 1px solid #d4d4d4; border-right: 0; border-bottom-width: 2px; background: #fff; overflow: hidden; }
.guide-head { height: 33px; padding: 0 7px 2px 23px; display: flex; align-items: center; justify-content: space-between; background: #fafafa; border-bottom: 1px solid #d4d4d4; font-size: 15.700px; color: #000; }
.guide-head b { font-weight: 600; }
.guide-head svg { width: 9px; height: 9px; }
.guide-body { height: 824px; display: flex; }
.guide-content { width: 379px; overflow: hidden; }
.guide-content > section { border-bottom: 1px solid #eaeaea; padding: 0 19px 0 20px; }
h4 { font-size: 17.400px; line-height: 24px; font-weight: 500; color: #444; -webkit-text-stroke: .25px #444; }
h5 { font-size: 14.900px; line-height: 18px; color: #333; }
.g-title { height: 53px; display: flex; align-items: center; justify-content: space-between; }
.g-title svg { width: 16px; height: 16px; color: #666; }
.g-sheet { height: 58px; padding-bottom: 1px; display: flex; align-items: center; gap: 11px; }
.g-sheet svg { width: 16px; height: 16px; }
.g-details { height: 239px; }
.g-details h5 { margin: 16px 0 4px; }
.textarea { width: 338px; height: 49px; border: 1px solid #bbb; border-radius: 2px; padding: 5px; font-size: 14.950px; line-height: 18px; color: #777; position: relative; white-space: nowrap; }
.textarea svg { position: absolute; width: 12px; height: 12px; right: 2px; bottom: 2px; }
.g-details .resources { margin: 20px 0 11px; }
.add-link { display: flex; align-items: center; gap: 12px; padding-left: 1px; font-size: 14.700px; color: #666; }
.add-link svg { width: 16px; height: 16px; }
.g-applied { height: 56px; }
.g-data { height: 172px; }
.g-source { height: 44px; display: flex; align-items: center; gap: 12px; font-size: 17px; color: #555; }
.g-source svg { width: 14px; height: 14px; }
.g-field { height: 25px; display: flex; align-items: center; gap: 11px; padding-left: 4px; font-size: 14.600px; color: #666; position: relative; top: 2px; }
.g-field b { font-size: 11.500px; font-weight: 500; color: #4c9bba; }
.g-field.green-text b { color: #00b180; }
.g-summary { height: 57px; }
.hint { display: flex; align-items: center; gap: 11px; padding: 12px 0 0 1px; font-size: 14.900px; line-height: 18px; color: #333; }
.hint svg { width: 16px; height: 20px; }
.outlier { display: flex; align-items: flex-start; gap: 7px; margin-top: 39px; font-size: 15px; line-height: 18px; color: #333; }
.outlier b { font-weight: 500; -webkit-text-stroke: .2px #333; }
.badge { width: 53px; height: 20px; border: 1px solid #1976c5; border-radius: 2px; color: #1976c5; text-align: center; font-size: 15px; line-height: 18px; }
.outlier svg { width: 10px; height: 16px; margin: 9px 4px 0 auto; }
.second { margin-top: 40px; }
.scrollbar { width: 20px; background: #f1f1f1; display: flex; flex-direction: column; padding-left: 1px; }
.scrollbar svg { width: 19px; height: 20px; }
.scrollbar i { width: 17px; height: 726px; background: #c1c1c1; }
.scrollbar .down { margin-top: auto; }

.sheet-tabs { height: 38px; background: #e5e5e5; border-bottom: 1px solid #cfcfcf; padding-top: 1px; display: grid; grid-template-columns: 164px 69px 71px 72px 71px 71px 71px 70px 128px 89px 40px 40px 40px; color: #555; }
.sheet-tabs div { border-right: 1px solid #c8c8c8; display: flex; align-items: center; justify-content: center; gap: 6px; padding: 0 2px 2px 0; white-space: nowrap; font-size: 14.800px; }
.sheet-tabs .active { background: #fafafa; font-weight: 600; padding-bottom: 4px; }
.sheet-tabs .data-source { justify-content: flex-start; padding-left: 11px; font-size: 14.700px; }
.sheet-tabs svg { width: 14px; height: 15px; fill: none; stroke: #666; stroke-width: 1.300; }
.sheet-tabs .add { width: 19px; height: 19px; }
.status { height: 25px; background: #eaeaea; display: grid; grid-template-columns: 79px 148px 1231px 159px 34px 34px 59px 88px auto; padding-left: 3px; align-items: center; font-size: 14px; color: #111; }
.status .sum { font-size: 13.700px; }
.status i, .pager, .views { height: 25px; border-left: 1px solid #ccc; }
.pager svg { width: 88px; height: 16px; margin-top: 4px; }
.views { padding-left: 11px; }
.views svg { width: 78px; height: 16px; margin-top: 4px; }

.taskbar { height: 50px; background: #d6d6d6; display: flex; align-items: center; color: #111; }
.start { width: 60px; display: flex; justify-content: center; }
.start svg { width: 20px; height: 20px; }
.os-search { width: 359px; height: 49px; background: #fff; border: 1px solid #bbb; border-right: 0; padding-left: 14px; display: flex; align-items: center; font-size: 17.900px; color: #222; }
.os-search > svg:first-child { width: 22px; height: 22px; }
.os-search span { margin-left: 13px; }
.camp { width: 97px; height: 49px; margin-left: auto; }
.tasks { height: 50px; display: flex; }
.tasks div { width: 62px; height: 50px; display: flex; align-items: center; justify-content: center; }
.tasks svg { width: 30px; height: 30px; }
.tasks .open { background: linear-gradient(#0078d7, #0078d7) center bottom / 51px 3px no-repeat; }
.tasks .current { background: linear-gradient(#f6f6f6, #f6f6f6) center top / 61px 47px no-repeat, linear-gradient(#0078d7, #0078d7) center bottom / 61px 3px no-repeat; }
.weather { width: 149px; margin-left: 300px; display: flex; align-items: center; gap: 12px; padding-top: 2px; font-size: 17px; }
.weather svg { width: 31px; height: 30px; margin-right: -3px; }
.tray { width: 112px; height: 24px; }
.lang, .clock { font-size: 14.200px; line-height: 23px; text-align: center; white-space: nowrap; }
.lang { width: 46px; margin-left: 2px; }
.clock { width: 82px; }
.notify { width: 20px; height: 20px; margin-left: 16px; }
.desktop-edge { height: 50px; border-left: 1px solid #aaa; margin-left: 25px; }

.activation { position: absolute; left: 1554px; top: 919px; display: flex; flex-direction: column; color: rgb(145 145 145 / 62%); }
.activation strong { font-size: 24px; line-height: 35px; font-weight: 400; }
.activation span { font-size: 17.100px; line-height: 24px; }
```
